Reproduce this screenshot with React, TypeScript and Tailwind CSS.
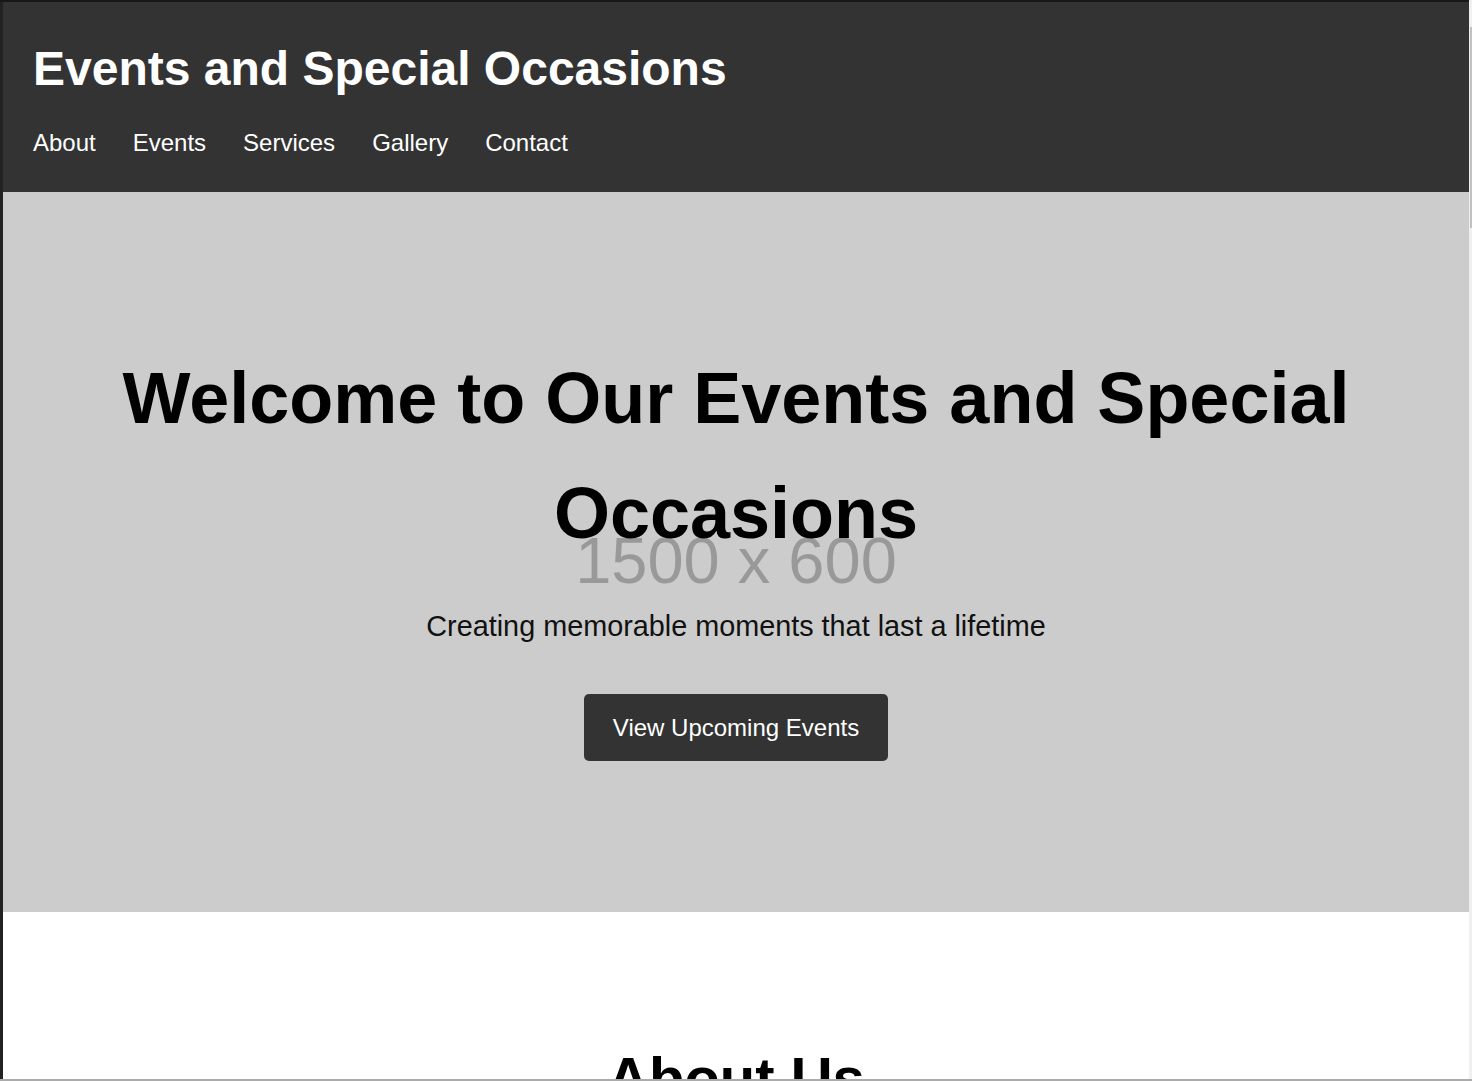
import React from "react";

const navLinks = ["About", "Events", "Services", "Gallery", "Contact"];

const Header = () => {
  return (
    <header className="bg-[#333333] text-white px-[30px] pt-[38px] h-[190px]">
      <h1 className="text-[48px] font-bold leading-[1.2]">
        Events and Special Occasions
      </h1>
      <nav className="mt-[31px]">
        <ul className="flex gap-[37px] text-[24px] leading-[1.15]">
          {navLinks.map((link) => (
            <li key={link}>
              <a href={`#${link.toLowerCase()}`}>{link}</a>
            </li>
          ))}
        </ul>
      </nav>
    </header>
  );
};

const Hero = () => {
  return (
    <section className="relative bg-[#cccccc] h-[720px] pt-[149px] text-center">
      {/* placeholder background image text */}
      <div className="absolute inset-0 flex items-center justify-center">
        <span className="mt-[16px] text-[65px] leading-none text-[#999999]">
          1500 x 600
        </span>
      </div>
      <div className="relative flex flex-col items-center">
        <h2 className="text-[72px] font-bold leading-[1.6] text-black px-[110px]">
          Welcome to Our Events and Special Occasions
        </h2>
        <p className="mt-[39px] text-[28.8px] leading-[1.15] text-[#111111]">
          Creating memorable moments that last a lifetime
        </p>
        <a
          href="#events"
          className="mt-[51px] flex items-center justify-center h-[67px] px-[29px] rounded-[5px] bg-[#333333] text-white text-[24px] leading-[1.15]"
        >
          View Upcoming Events
        </a>
      </div>
    </section>
  );
};

const About = () => {
  return (
    <section id="about" className="bg-white pt-[131px] text-center">
      <h2 className="text-[58px] font-bold leading-[1.2] text-black">About Us</h2>
    </section>
  );
};

export default function App() {
  return (
    <div className="w-[1472px] h-[1081px] overflow-hidden flex flex-col bg-white font-['Liberation_Sans',Arial,sans-serif]">
      <div className="flex h-[2px] shrink-0">
        <div className="flex-1 bg-[#171717]" />
        <div className="w-[3px] bg-[#f0f0f0]" />
      </div>
      <div className="flex flex-1 min-h-0">
        <div className="w-[3px] shrink-0 bg-[#222222]" />
        <main className="flex-1 min-w-0 overflow-hidden">
          <Header />
          <Hero />
          <About />
        </main>
        <div className="w-[3px] shrink-0 bg-[#f0f0f0] flex flex-col items-end">
          <div className="h-[25px]" />
          <div className="w-[2px] h-[201px] bg-[#c1c1c1]" />
        </div>
      </div>
      <div className="h-[2px] shrink-0 bg-[#ababab]" />
    </div>
  );
}
